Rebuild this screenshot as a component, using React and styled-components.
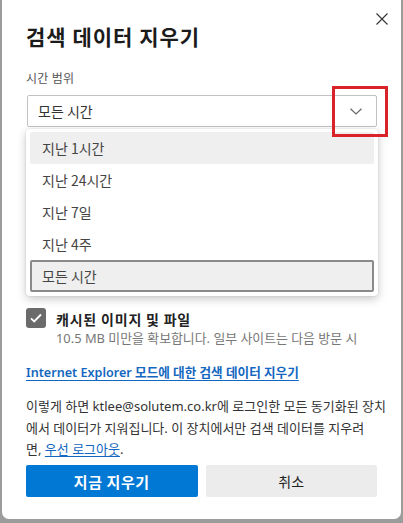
import React from "react";
import styled, { createGlobalStyle } from "styled-components";

const Global = createGlobalStyle`
  html, body { margin: 0; padding: 0; }
  body {
    background: #9c9c9c;
    font-family: "Noto Sans", "Noto Sans CJK KR", sans-serif;
    width: 403px;
    height: 523px;
    overflow: hidden;
  }
`;

const Dialog = styled.div`
  position: relative;
  box-sizing: border-box;
  margin: 0 2px;
  width: 399px;
  height: 519px;
  background: #ffffff;
  border-radius: 0 0 7px 7px;
  padding: 22px 24px 22px 24px;
  display: flex;
  flex-direction: column;
`;

const Close = styled.button`
  position: absolute;
  top: 13px;
  right: 13px;
  width: 12px;
  height: 12px;
  padding: 0;
  border: none;
  background: none;
  display: flex;
`;

const Title = styled.h1`
  margin: 0;
  font-size: 21px;
  line-height: 28px;
  font-weight: 700;
  letter-spacing: 1px;
  color: #1b1b1b;
  font-family: "Noto Sans CJK KR", sans-serif;
`;

const Label = styled.div`
  margin-top: 20px;
  font-size: 12px;
  line-height: 16px;
  letter-spacing: 0.3px;
  color: #555;
  font-family: "Noto Sans CJK KR", sans-serif;
`;

const SelectWrap = styled.div`
  position: relative;
  margin-top: 9px;
`;

const Select = styled.div`
  box-sizing: border-box;
  height: 32px;
  margin-left: 1px;
  border: 1px solid #c2c2c2;
  border-radius: 2px;
  display: flex;
  align-items: center;
  justify-content: space-between;
  padding: 0 14px 0 10px;
  font-size: 14px;
  color: #333;
  font-family: "Noto Sans CJK KR", sans-serif;
`;

const Menu = styled.div`
  position: absolute;
  left: 0;
  top: calc(100% + 2px);
  width: 352px;
  box-sizing: border-box;
  background: #fff;
  border-radius: 4px;
  box-shadow: 0 3px 10px rgba(0, 0, 0, 0.22), 0 0 2px rgba(0, 0, 0, 0.12);
  padding: 3px 4px 4px;
  display: flex;
  flex-direction: column;
  z-index: 2;
`;

const Item = styled.div`
  box-sizing: border-box;
  height: 32px;
  display: flex;
  align-items: center;
  padding-left: ${(p) => (p.$focused ? 10 : 12)}px;
  border-radius: 2px;
  font-size: 14px;
  color: #444;
  font-family: "Noto Sans CJK KR", sans-serif;
  background: ${(p) => (p.$hover || p.$focused ? "#efefef" : "transparent")};
  border: ${(p) => (p.$focused ? "2px solid #8a8a8a" : "none")};
`;

const Highlight = styled.div`
  position: absolute;
  left: 330px;
  top: 86px;
  width: 56px;
  height: 51px;
  box-sizing: border-box;
  border: 3px solid #d9232b;
  z-index: 3;
  pointer-events: none;
`;

const CheckList = styled.div`
  display: flex;
  flex-direction: column;
  padding-top: 181px;
`;

const Row = styled.div`
  display: grid;
  grid-template-columns: 20px 1fr;
  column-gap: 10px;
`;

const Box = styled.div`
  width: 20px;
  height: 20px;
  border-radius: 3px;
  background: #6b6b6b;
  display: flex;
  align-items: center;
  justify-content: center;
`;

const RowTitle = styled.div`
  font-size: 14px;
  line-height: 22px;
  font-weight: 700;
  letter-spacing: 0.8px;
  color: #222;
  font-family: "Noto Sans CJK KR", sans-serif;
  white-space: nowrap;
`;

const RowDesc = styled.div`
  font-size: 12.9px;
  line-height: 16px;
  color: #777;
  white-space: nowrap;
  overflow: hidden;
`;

const IELink = styled.a`
  margin-top: 17px;
  font-size: 12.6px;
  line-height: 20px;
  font-weight: 600;
  color: #1467c0;
  text-decoration: underline;
  text-underline-offset: 3px;
  white-space: nowrap;
`;

const Para = styled.p`
  margin: 13px 0 0;
  font-size: 13px;
  line-height: 21.5px;
  color: #333;
  white-space: nowrap;
`;

const InlineLink = styled.a`
  color: #1467c0;
  text-decoration: underline;
  text-underline-offset: 2px;
`;

const Buttons = styled.div`
  margin-top: auto;
  display: grid;
  grid-template-columns: 1fr 1fr;
  gap: 8px;
`;

const Button = styled.button`
  height: 32px;
  border: none;
  border-radius: 2px;
  font-family: "Noto Sans CJK KR", sans-serif;
  font-size: ${(p) => (p.$primary ? 15 : 14)}px;
  font-weight: ${(p) => (p.$primary ? 700 : 400)};
  letter-spacing: ${(p) => (p.$primary ? 0.6 : 0)}px;
  color: ${(p) => (p.$primary ? "#fff" : "#222")};
  background: ${(p) => (p.$primary ? "#0078d4" : "#ececec")};
  padding: 0;
`;

const Check = () => (
  <svg width="14" height="14" viewBox="0 0 14 14">
    <path d="M2 7.3l3.2 3.2L12 3.5" fill="none" stroke="#fff" strokeWidth="1.8" />
  </svg>
);

const options = ["지난 1시간", "지난 24시간", "지난 7일", "지난 4주", "모든 시간"];

export default function App() {
  return (
    <>
      <Global />
      <Dialog>
        <Close aria-label="닫기">
          <svg width="12" height="12" viewBox="0 0 12 12">
            <path d="M0.5 0.5L11.5 11.5M11.5 0.5L0.5 11.5" stroke="#333" strokeWidth="1.1" />
          </svg>
        </Close>
        <Title>검색 데이터 지우기</Title>
        <Label>시간 범위</Label>
        <SelectWrap>
          <Select>
            <span>모든 시간</span>
            <svg width="12" height="7" viewBox="0 0 12 7">
              <path d="M0.5 0.8L6 6L11.5 0.8" fill="none" stroke="#666" strokeWidth="1.2" />
            </svg>
          </Select>
          <Menu>
            {options.map((o, i) => (
              <Item key={o} $hover={i === 0} $focused={i === options.length - 1}>
                {o}
              </Item>
            ))}
          </Menu>
        </SelectWrap>
        <CheckList>
          <Row>
            <Box>
              <Check />
            </Box>
            <div>
              <RowTitle>캐시된 이미지 및 파일</RowTitle>
              <RowDesc>10.5 MB 미만을 확보합니다. 일부 사이트는 다음 방문 시</RowDesc>
            </div>
          </Row>
        </CheckList>
        <IELink href="#">Internet Explorer 모드에 대한 검색 데이터 지우기</IELink>
        <Para>
          이렇게 하면 ktlee@solutem.co.kr에 로그인한 모든 동기화된 장치
          <br />
          에서 데이터가 지워집니다. 이 장치에서만 검색 데이터를 지우려
          <br />
          면, <InlineLink href="#">우선 로그아웃</InlineLink>.
        </Para>
        <Buttons>
          <Button $primary>지금 지우기</Button>
          <Button>취소</Button>
        </Buttons>
        <Highlight />
      </Dialog>
    </>
  );
}
